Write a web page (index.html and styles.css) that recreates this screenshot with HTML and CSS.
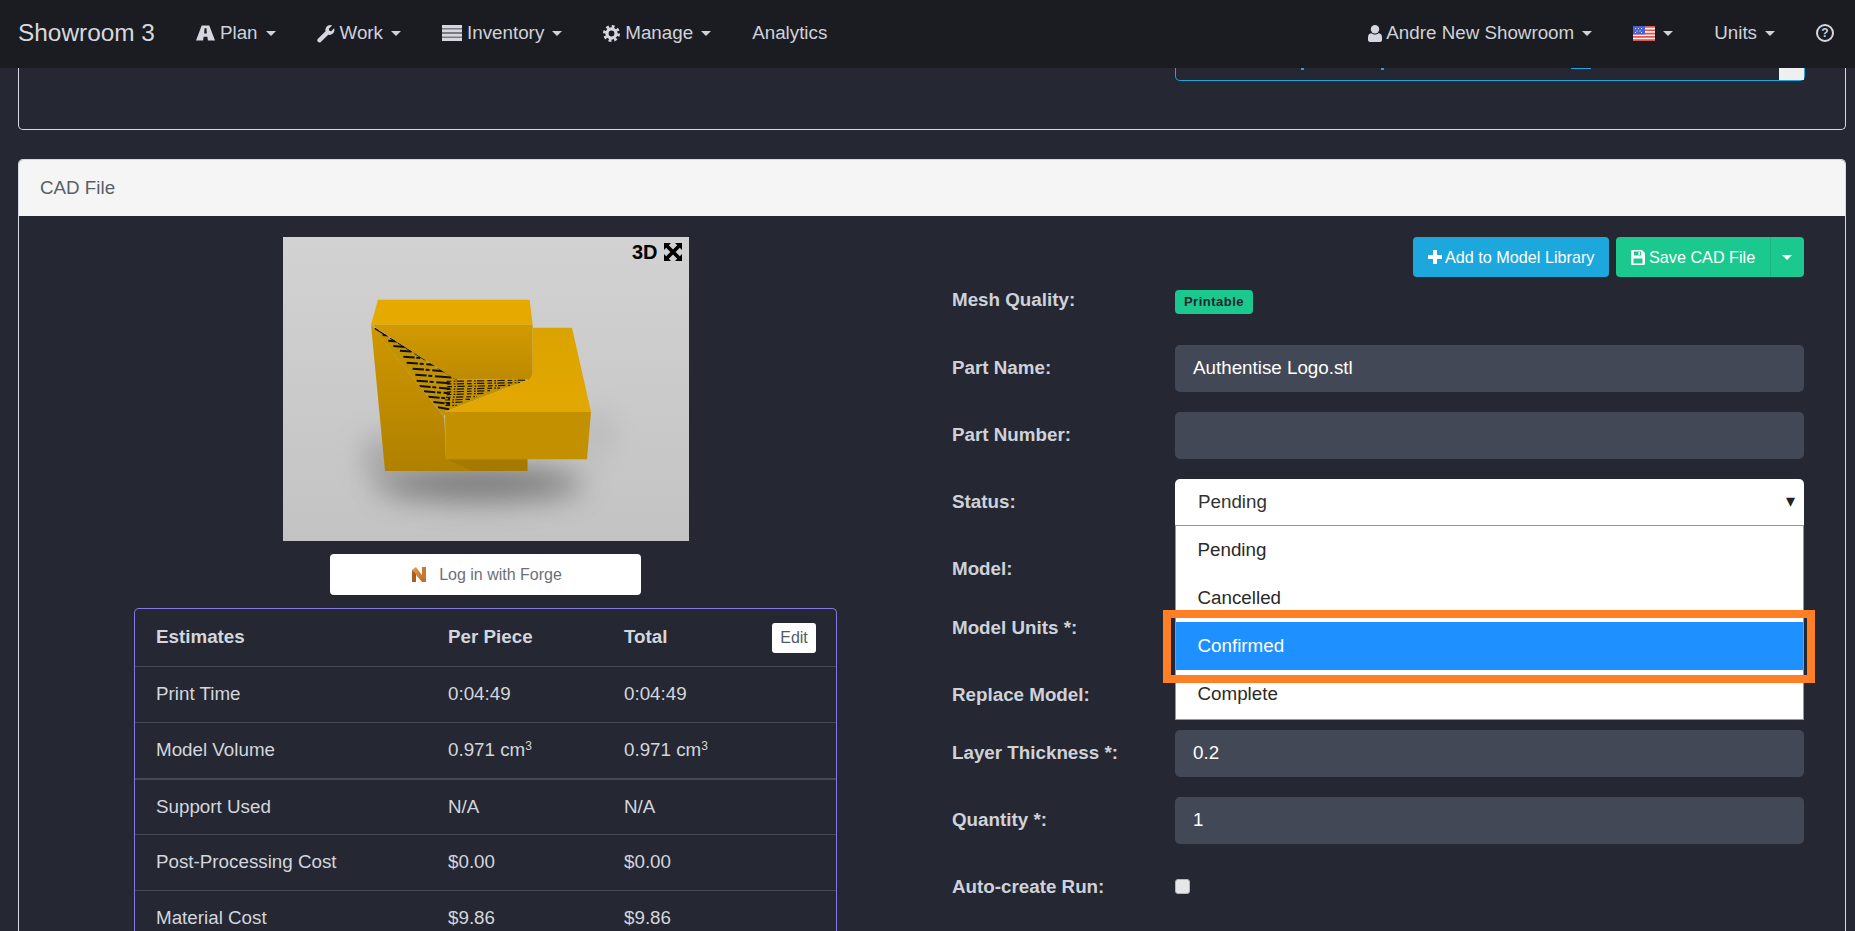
FILE: index.html
```html
<!DOCTYPE html>
<html lang="en">
<head>
<meta charset="utf-8">
<title>Showroom 3</title>
<link rel="stylesheet" href="styles.css">
</head>
<body>
<nav class="nav">
  <a class="brand">Showroom 3</a>
  <ul class="menu">
    <li class="item"><svg class="ic" width="19" height="16" viewBox="0 0 20 16"><path fill-rule="evenodd" d="M6 0h8l6 16h-7.500l-.5-4H8l-.5 4H0zM9 3h2l.4 5.500H8.600z"/></svg>Plan<i class="caret"></i></li>
    <li class="item"><svg class="ic" width="18" height="19" viewBox="0 0 19 20"><path d="M1 15.500 9 7.500C8.300 4.500 10.500 1 14 1c.8 0 1.500.2 2 .5L12.500 5l.5 2 2 .5L18 4.500c.3.6.4 1.200.4 1.900 0 3.500-3.500 5.700-6.500 4.900L4 19c-1 1-2.200.6-3-.2s-1-2.300 0-3.300z"/></svg>Work<i class="caret"></i></li>
    <li class="item"><svg class="ic" width="20" height="16" viewBox="0 0 20 16"><path d="M0 0h20v3.400H0zM0 4.200h20v3.400H0zM0 8.400h20v3.400H0zM0 12.600h20V16H0z"/></svg>Inventory<i class="caret"></i></li>
    <li class="item"><svg class="ic" width="17" height="17" viewBox="0 0 18 18"><circle class="gear" cx="9" cy="9" r="4.800"/><circle class="teeth" cx="9" cy="9" r="7.500"/></svg>Manage<i class="caret"></i></li>
    <li class="item plain">Analytics</li>
  </ul>
  <ul class="menu right">
    <li class="item"><svg class="ic tight" width="14" height="17" viewBox="0 0 14 17"><circle cx="7" cy="4.200" r="4.200"/><path d="M0 15v-3c0-2.500 1.500-3.500 3.500-3.800C4.500 9 5.700 9.500 7 9.500s2.500-.5 3.500-1.300c2 .3 3.500 1.300 3.500 3.800v3c0 1.300-1 2-2 2H2c-1 0-2-.7-2-2z"/></svg>Andre New Showroom<i class="caret"></i></li>
    <li class="item"><svg class="flag" width="22" height="15" viewBox="0 0 22 15"><rect width="22" height="15" fill="#f4f1f1"/><path d="M0 0h22v1.700H0zM0 3.400h22v1.700H0zM0 6.700h22v1.700H0zM0 10h22v1.700H0zM0 13.300h22V15H0z" fill="#e2554f"/><rect width="12" height="8.400" fill="#4a63c9"/><path d="M2 2h1v1H2zM5 2h1v1H5zM8 2h1v1H8zM3.500 4.500h1v1h-1zM6.500 4.500h1v1h-1zM2 6h1v1H2zM8 6h1v1H8z" fill="#dfe6ff"/></svg><i class="caret"></i></li>
    <li class="item">Units<i class="caret"></i></li>
    <li class="item plain"><span class="help">?</span></li>
  </ul>
</nav>

<main class="page">
  <section class="stub">
    <div class="stub-input"><i class="tick t1"></i><i class="tick t2"></i><i class="tick t3"></i><span class="stub-arrow"></span></div>
  </section>

  <section class="card">
    <header class="card-head">CAD File</header>
    <div class="card-body">
      <div class="left">
        <figure class="viewer">
          <svg class="render" width="406" height="304" viewBox="69 51 1218 912">
            <defs>
              <linearGradient id="bg" x1="0" y1="0" x2="0" y2="1"><stop offset="0" stop-color="#d2d2d2"/><stop offset="1" stop-color="#c3c3c3"/></linearGradient>
              <linearGradient id="fr" x1="0" y1="0" x2="0" y2="1"><stop offset="0" stop-color="#d29a00"/><stop offset="1" stop-color="#bd8b00"/></linearGradient>
              <linearGradient id="lo" x1="0" y1="0" x2="0" y2="1"><stop offset="0" stop-color="#cf9800"/><stop offset="1" stop-color="#b08000"/></linearGradient>
              <linearGradient id="tp" x1="0" y1="0" x2="0" y2="1"><stop offset="0" stop-color="#dba300"/><stop offset="1" stop-color="#e3a700"/></linearGradient>
              <linearGradient id="nl" x1="0" y1="0" x2="1" y2="1"><stop offset="0" stop-color="#e2a05a"/><stop offset="1" stop-color="#b5651d"/></linearGradient>
              <filter id="blur" filterUnits="userSpaceOnUse" x="69" y="51" width="1218" height="912"><feGaussianBlur stdDeviation="45"/></filter>
              <clipPath id="tri"><path d="M333 316 585 478H809L556 575 553 592z"/></clipPath>
            </defs>
            <rect x="69" y="51" width="1218" height="912" fill="url(#bg)"/>
            <ellipse cx="660" cy="790" rx="310" ry="50" fill="#666" opacity=".85" filter="url(#blur)"/>
            <ellipse cx="370" cy="710" rx="50" ry="60" fill="#777" opacity=".55" filter="url(#blur)"/>
            <ellipse cx="1010" cy="640" rx="40" ry="70" fill="#999" opacity=".4" filter="url(#blur)"/>
            <path d="M333 314 553 592 558 718H802V753H375z" fill="url(#lo)"/>
            <path d="M558 718H802V753H640z" fill="#a67900"/>
            <path d="M354 239H809L818 314H333z" fill="#e6a900"/>
            <path d="M333 314H818V465L809 478H585z" fill="url(#fr)"/>
            <path d="M818 323H936L993 575H556L809 478 818 460z" fill="url(#tp)"/>
            <path d="M555 575H993L981 718H557z" fill="#c39100"/>
            <g clip-path="url(#tri)">
              <path d="M333 316 585 478H809L556 575 553 592z" fill="#c39200"/>
              <path class="stripes" d="M345 325 400 330M368 345 450 352M385 362 470 370M400 378 500 386M420 392 540 402M430 410 560 420M440 428 570 438M458 446 580 456M466 464 590 474M470 482 570 490M478 498 570 506M492 514 570 520M505 530 570 536M520 546 570 552M534 562 570 568"/>
              <path class="fine" d="M560 484 810 480M560 492 780 488M562 500 750 496M560 508 720 504M560 516 690 512M560 524 670 520M558 532 650 530M556 540 630 538M556 548 610 546M556 556 590 556"/>
              <path class="edge" d="M345 325 590 478"/>
            </g>
          </svg>
          <figcaption class="tag">3D<svg width="18" height="18" viewBox="0 0 18 18"><path d="M0 0h7L4.800 2.200 9 6.400 13.200 2.200 11 0h7v7l-2.200-2.200L11.600 9l4.200 4.200L18 11v7h-7l2.200-2.200L9 11.600l-4.200 4.200L7 18H0v-7l2.200 2.200L6.400 9 2.200 4.800 0 7z"/></svg></figcaption>
        </figure>
        <button class="forge"><svg width="16" height="17" viewBox="0 0 16 17"><path d="M11 1h4v15h-4z" fill="#c57a2f"/><path d="M1 4 5 1 15 14.500 11 16z" fill="url(#nl)"/><path d="M1 4 5 8v8H1z" fill="#a85f1c"/></svg><span>Log in with Forge</span></button>
        <table class="est">
          <thead><tr><th>Estimates</th><th>Per Piece</th><th>Total</th><th class="act"><span class="edit">Edit</span></th></tr></thead>
          <tbody>
            <tr><td>Print Time</td><td>0:04:49</td><td>0:04:49</td><td></td></tr>
            <tr class="thick"><td>Model Volume</td><td>0.971 cm<sup>3</sup></td><td>0.971 cm<sup>3</sup></td><td></td></tr>
            <tr><td>Support Used</td><td>N/A</td><td>N/A</td><td></td></tr>
            <tr><td>Post-Processing Cost</td><td>$0.00</td><td>$0.00</td><td></td></tr>
            <tr><td>Material Cost</td><td>$9.86</td><td>$9.86</td><td></td></tr>
          </tbody>
        </table>
      </div>

      <form class="right-col">
        <div class="tools">
          <button type="button" class="btn blue"><svg width="14" height="14" viewBox="0 0 14 14"><path d="M5 0h4v5h5v4H9v5H5V9H0V5h5z"/></svg>Add to Model Library</button>
          <div class="split">
            <button type="button" class="btn green"><svg width="14" height="15" viewBox="0 0 14 15"><path fill-rule="evenodd" d="M0 1.500C0 .7.700 0 1.500 0H11l3 3v10.500c0 .8-.7 1.500-1.500 1.500h-11C.7 15 0 14.300 0 13.500zM3 1.500V5.500h7V1.500zM7.500 2h1.500v3H7.500zM2.500 8.500v5h9v-5z"/></svg>Save CAD File</button>
            <button type="button" class="btn green more"><i class="caret white"></i></button>
          </div>
        </div>
        <div class="row mesh"><span class="lbl">Mesh Quality:</span><span class="badge">Printable</span></div>
        <div class="row"><span class="lbl">Part Name:</span><div class="field">Authentise Logo.stl</div></div>
        <div class="row"><span class="lbl">Part Number:</span><div class="field"></div></div>
        <div class="row"><span class="lbl">Status:</span>
          <div class="select-wrap">
            <div class="select">Pending<span class="arrow">▾</span></div>
            <ul class="options">
              <li>Pending</li>
              <li>Cancelled</li>
              <li class="on">Confirmed</li>
              <li>Complete</li>
            </ul>
            <div class="mark"></div>
          </div>
        </div>
        <div class="row model"><span class="lbl">Model:</span></div>
        <div class="row"><span class="lbl">Model Units *:</span></div>
        <div class="row replace"><span class="lbl">Replace Model:</span></div>
        <div class="row"><span class="lbl">Layer Thickness *:</span><div class="field">0.2</div></div>
        <div class="row"><span class="lbl">Quantity *:</span><div class="field">1</div></div>
        <div class="row"><span class="lbl">Auto-create Run:</span><span class="check"></span></div>
      </form>
    </div>
  </section>
</main>
</body>
</html>
```
FILE: styles.css
```css
* { box-sizing: border-box; }
html, body { margin: 0; height: 100%; overflow: hidden; }
body { background: #252832; color: #d0d3db; font: 18.800px/1.5 "Liberation Sans", Arial, sans-serif; }
ul { list-style: none; margin: 0; padding: 0; }

.nav { height: 68px; background: #1b1c21; display: flex; align-items: center; padding: 0 21px 2px 18px; color: #cfd2da; }
.brand { font-size: 24.400px; margin-right: 41px; color: #d6d8de; }
.menu { display: flex; align-items: center; gap: 41px; }
.menu.right { margin-left: auto; }
.item { display: flex; align-items: center; }
.ic { fill: #d5d7e0; margin-right: 5px; }
.ic.tight { margin-right: 4px; }
.gear { fill: none; stroke: #d5d7e0; stroke-width: 3.500; }
.teeth { fill: none; stroke: #d5d7e0; stroke-width: 3; stroke-dasharray: 3 2.890; }
.caret { display: block; width: 0; height: 0; border: 5px solid transparent; border-top-color: #cfd2da; border-bottom: 0; margin-left: 8px; }
.caret.white { border-top-color: #fff; margin: 0; }
.flag { display: block; }
.help { display: block; width: 18px; height: 18px; border: 2px solid #d5d7e0; border-radius: 50%; font: bold 12px/14px "Liberation Sans", sans-serif; text-align: center; }

.page { padding: 0 9px 0 18px; }
.stub { height: 62px; border: 1px solid #d5d8de; border-top: 0; border-radius: 0 0 5px 5px; padding-left: 1156px; margin-bottom: 29px; }
.stub-input { position: relative; width: 630px; height: 13px; border: 1px solid #1ca8dd; border-top: 0; border-radius: 0 0 5px 5px; }
.stub-arrow { position: absolute; right: 0; top: 0; width: 25px; height: 12px; background: #efefef; }
.tick { position: absolute; top: 0; height: 2px; background: #1ca8dd; }
.t1 { left: 125px; width: 3px; }
.t2 { left: 205px; width: 3px; }
.t3 { left: 395px; width: 20px; height: 1px; }

.card { border: 1px solid #d5d8de; border-bottom: 0; border-radius: 5px 5px 0 0; }
.card-head { height: 56px; background: #f5f5f5; color: #5a5e66; padding: 0 21px; line-height: 56px; border-radius: 4px 4px 0 0; }
.card-body { display: grid; grid-template-columns: 703px 852px; column-gap: 115px; padding: 21px 0 0 115px; }

.left { display: flex; flex-direction: column; align-items: center; }
.viewer { position: relative; margin: 0; width: 406px; height: 304px; }
.render { display: block; }
.tag { position: absolute; top: 3px; right: 7px; display: flex; align-items: center; gap: 6px; color: #000; font-weight: bold; font-size: 20px; line-height: 24px; }
.stripes { fill: none; stroke: #111; stroke-width: 6; stroke-dasharray: 34 5 12 8 50 5; }
.fine { fill: none; stroke: #1a1400; stroke-width: 3.500; stroke-dasharray: 14 7 5 4 22 9; }
.edge { fill: none; stroke: #000; stroke-width: 5; stroke-dasharray: 40 14 18 10 50 8; }
.forge { width: 311px; height: 41px; margin: 13px 0 13px; border: 0; border-radius: 4px; background: #fff; color: #6a7079; font: 16px "Liberation Sans", sans-serif; display: flex; align-items: center; justify-content: center; gap: 12px; padding: 0 0 0 2px; }

.est { width: 703px; border: 1px solid #8677e6; border-bottom: 0; border-radius: 5px 5px 0 0; border-spacing: 0; table-layout: fixed; color: #d3d6de; }
.est th, .est td { padding: 0 0 0 21px; text-align: left; height: 56px; }
.est th { height: 57px; font-weight: bold; }
.est th:nth-child(1) { width: 292px; }
.est th:nth-child(2) { width: 176px; }
.est th:nth-child(3) { width: 131px; }
.est td { border-top: 1px solid #454957; }
.est tr.thick + tr td { border-top: 2px solid #454957; }
.est sup { font-size: 12px; line-height: 0; vertical-align: 6px; }
.act { text-align: right !important; padding: 0 20px 0 0 !important; }
.edit { display: inline-block; width: 44px; height: 30px; background: #fff; color: #555a62; border-radius: 3px; font: 16px/30px "Liberation Sans", sans-serif; text-align: center; }

.tools { display: flex; justify-content: flex-end; gap: 7px; margin-bottom: 13px; }
.btn { height: 40px; border: 0; border-radius: 4px; color: #fff; font: 16.200px "Liberation Sans", sans-serif; display: flex; align-items: center; gap: 3px; padding: 0 0 0 15px; white-space: nowrap; }
.btn svg { fill: #fff; }
.blue { background: #1ca8dd; width: 196px; }
.green { background: #1bc98e; }
.split { display: flex; }
.split .btn:first-child { border-radius: 4px 0 0 4px; width: 154px; gap: 4px; }
.more { width: 34px; padding: 0 0 0 11px; border-left: 1px solid #19b782; border-radius: 0 4px 4px 0; }

.row { display: grid; grid-template-columns: 223px 629px; align-items: center; min-height: 47px; margin-bottom: 20px; }
.lbl { font-weight: bold; color: #cfd2da; }
.mesh { min-height: 24px; margin-bottom: 31px; }
.mesh .lbl { line-height: 18px; margin-top: -4px; }
.model { margin-bottom: 12px; }
.replace { margin-bottom: 11px; }
.badge { justify-self: start; width: 78px; height: 24px; background: #1bc98e; color: #20262f; border-radius: 4px; font: bold 13px/24px "Liberation Sans", sans-serif; letter-spacing: .5px; text-align: center; }
.field { height: 47px; background: #434857; border-radius: 5px; color: #fff; padding: 0 18px; line-height: 46px; }
.check { width: 15px; height: 15px; background: #e6e6e6; border: 1px solid #b5b5b5; border-radius: 3px; margin-top: -2px; }

.select-wrap { position: relative; height: 47px; }
.select { height: 46px; background: #fff; color: #333; padding-left: 23px; line-height: 46px; border-radius: 5px 5px 0 0; position: relative; }
.arrow { position: absolute; right: 9px; top: -1px; font-size: 18px; color: #222; }
.options { position: absolute; top: 46px; left: 0; width: 100%; background: #fff; border: 1px solid #7d97cf; padding-bottom: 1px; z-index: 2; color: #2a2a2a; }
.options li { height: 48px; padding-left: 21.500px; line-height: 47px; }
.options li.on { background: #1e90ff; color: #fff; }
.mark { position: absolute; top: 131px; left: -12px; width: 652px; height: 73px; border: 8px solid #ff7f27; z-index: 3; }
```
